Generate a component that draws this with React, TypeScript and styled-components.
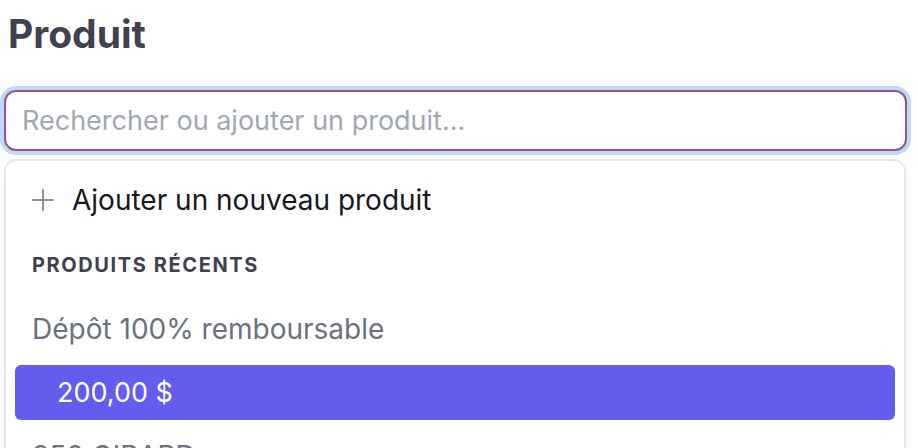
import React from "react";
import styled, { createGlobalStyle } from "styled-components";

const GlobalStyle = createGlobalStyle`
  html, body {
    margin: 0;
    padding: 0;
    background: #ffffff;
    font-family: Inter, "Noto Sans", Arial, sans-serif;
  }
`;

const Page = styled.div`
  padding: 0 11px 0 4px;
  height: 448px;
  overflow: hidden;
`;

const Title = styled.h1`
  margin: 11px 0 0 4px;
  font-size: 39px;
  line-height: 46px;
  font-weight: 700;
  color: #3f4150;
`;

const SearchInput = styled.input`
  display: block;
  box-sizing: border-box;
  width: 100%;
  height: 61px;
  margin-top: 33px;
  padding: 0 16px;
  border: 2px solid #9b5580;
  border-radius: 12px;
  box-shadow: 0 0 0 4px #bedafa;
  outline: none;
  font-family: inherit;
  font-size: 27px;
  color: #111827;

  &::placeholder {
    color: #a0a8b6;
  }
`;

const Dropdown = styled.div`
  box-sizing: border-box;
  width: 902px;
  margin-top: 8px;
  padding: 6px 9px;
  border: 2px solid #e6e8ee;
  border-radius: 12px;
  box-shadow: 0 4px 12px rgba(15, 23, 42, 0.06);
`;

const AddRow = styled.div`
  display: flex;
  align-items: center;
  gap: 18px;
  height: 66px;
  padding-left: 17px;
  font-size: 28px;
  color: #161824;
`;

const SectionLabel = styled.div`
  display: flex;
  align-items: center;
  height: 64px;
  padding-left: 17px;
  font-size: 20px;
  font-weight: 700;
  letter-spacing: 1.6px;
  text-transform: uppercase;
  color: #3f4150;
`;

const Option = styled.div<{ $indent?: boolean; $active?: boolean }>`
  display: flex;
  align-items: center;
  height: ${(p) => (p.$active ? "55px" : "64px")};
  margin: ${(p) => (p.$active ? "4px 0" : "0")};
  padding-left: ${(p) => (p.$indent ? "42px" : "17px")};
  border-radius: 6px;
  font-size: ${(p) => (p.$active ? "27px" : "28px")};
  background: ${(p) => (p.$active ? "#635cef" : "transparent")};
  color: ${(p) => (p.$active ? "#ffffff" : "#6b7180")};
`;

const PlusIcon = () => (
  <svg width="22" height="22" viewBox="0 0 22 22" fill="none">
    <path d="M11 1v20M1 11h20" stroke="#8b909c" strokeWidth="2" strokeLinecap="round" />
  </svg>
);

const App = () => {
  return (
    <>
      <GlobalStyle />
      <Page>
        <Title>Produit</Title>
        <SearchInput placeholder="Rechercher ou ajouter un produit..." />
        <Dropdown>
          <AddRow>
            <PlusIcon />
            Ajouter un nouveau produit
          </AddRow>
          <SectionLabel>Produits récents</SectionLabel>
          <Option>Dépôt 100% remboursable</Option>
          <Option $indent $active>
            200,00 $
          </Option>
          <Option>350 GIRARD</Option>
        </Dropdown>
      </Page>
    </>
  );
};

export default App;
